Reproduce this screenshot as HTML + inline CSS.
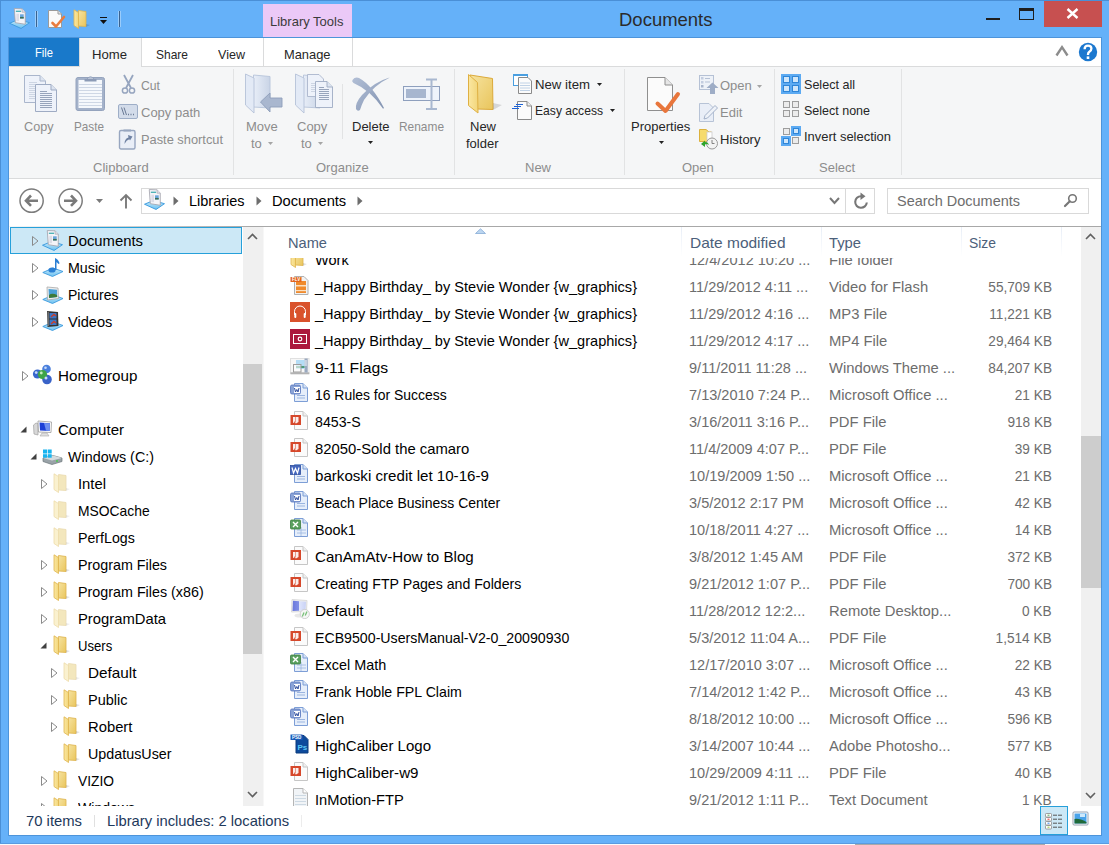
<!DOCTYPE html>
<html><head><meta charset="utf-8"><style>
html,body{margin:0;padding:0;}
body{width:1109px;height:845px;position:relative;overflow:hidden;background:#65b1f9;font-family:"Liberation Sans",sans-serif;}
.t{position:absolute;white-space:nowrap;}
.r{position:absolute;}
</style></head><body>

<div class="r" style="left:0px;top:0px;width:1109px;height:1px;background:#4a8fd6"></div>
<div class="r" style="left:0px;top:0px;width:1px;height:845px;background:#4a8fd6"></div>
<div class="r" style="left:0px;top:843px;width:1109px;height:1px;background:#5a9be0"></div>
<div class="r" style="left:0px;top:844px;width:1109px;height:1px;background:#fbfbfb"></div>
<div class="r" style="left:855px;top:844px;width:190px;height:1px;background:#a9a9a9"></div>
<div class="r" style="left:8px;top:37px;width:1094px;height:799px;background:#fff;box-sizing:border-box;border:1px solid #4d94da"></div>
<div class="t" style="left:619px;top:11px;font-size:18.5px;line-height:18.5px;color:#2b2b2b;transform:scaleX(0.9993);transform-origin:0 0;">Documents</div>
<div class="r" style="left:1044px;top:1px;width:58px;height:26px;background:#c75050"></div>
<div class="r" style="left:986px;top:18px;width:14px;height:2px;background:#1e1e1e"></div>
<div class="r" style="left:1019px;top:8px;width:15px;height:12px;box-sizing:border-box;border:1px solid #1e1e1e;border-top-width:3px"></div>
<div class="r" style="left:263px;top:4px;width:89px;height:33px;background:#ebc9f7"></div>
<div class="t" style="left:270px;top:15px;font-size:13px;line-height:13px;color:#3b3b3b;">Library Tools</div>
<div class="r" style="left:9px;top:38px;width:1092px;height:28px;background:#fff"></div>
<div class="r" style="left:9px;top:66px;width:1092px;height:1px;background:#dadbdc"></div>
<div class="r" style="left:9px;top:38px;width:70px;height:28px;background:#1979ca"></div>
<div class="t" style="left:35px;top:46px;font-size:13px;line-height:13px;color:#fff;transform:scaleX(0.8593);transform-origin:0 0;">File</div>
<div class="r" style="left:79px;top:38px;width:63px;height:29px;background:#f5f6f7;box-sizing:border-box;border:1px solid #dadbdc;border-bottom:none;border-top:none"></div>
<div class="t" style="left:92px;top:48px;font-size:13px;line-height:13px;color:#262626;transform:scaleX(1.0093);transform-origin:0 0;">Home</div>
<div class="t" style="left:156px;top:48px;font-size:13px;line-height:13px;color:#262626;transform:scaleX(0.9225);transform-origin:0 0;">Share</div>
<div class="t" style="left:218px;top:48px;font-size:13px;line-height:13px;color:#262626;transform:scaleX(0.9663);transform-origin:0 0;">View</div>
<div class="r" style="left:263px;top:38px;width:1px;height:28px;background:#dadbdc"></div>
<div class="r" style="left:352px;top:38px;width:1px;height:28px;background:#dadbdc"></div>
<div class="t" style="left:284px;top:48px;font-size:13px;line-height:13px;color:#262626;transform:scaleX(0.9898);transform-origin:0 0;">Manage</div>
<div class="r" style="left:9px;top:67px;width:1092px;height:111px;background:#f5f6f7"></div>
<div class="r" style="left:9px;top:178px;width:1092px;height:1px;background:#dadbdc"></div>
<div class="r" style="left:233px;top:69px;width:1px;height:106px;background:#e2e3e4"></div>
<div class="r" style="left:454px;top:69px;width:1px;height:106px;background:#e2e3e4"></div>
<div class="r" style="left:624px;top:69px;width:1px;height:106px;background:#e2e3e4"></div>
<div class="r" style="left:774px;top:69px;width:1px;height:106px;background:#e2e3e4"></div>
<div class="r" style="left:901px;top:69px;width:1px;height:106px;background:#e2e3e4"></div>
<div class="r" style="left:342px;top:84px;width:1px;height:55px;background:#e2e3e4"></div>
<div class="t" style="left:24px;top:120px;font-size:13px;line-height:13px;color:#8d8d8d;transform:scaleX(0.9721);transform-origin:0 0;">Copy</div>
<div class="t" style="left:74px;top:120px;font-size:13px;line-height:13px;color:#8d8d8d;transform:scaleX(0.9025);transform-origin:0 0;">Paste</div>
<div class="t" style="left:141px;top:79px;font-size:13px;line-height:13px;color:#8d8d8d;transform:scaleX(0.9392);transform-origin:0 0;">Cut</div>
<div class="t" style="left:141px;top:106px;font-size:13px;line-height:13px;color:#8d8d8d;">Copy path</div>
<div class="t" style="left:141px;top:133px;font-size:13px;line-height:13px;color:#8d8d8d;transform:scaleX(0.9868);transform-origin:0 0;">Paste shortcut</div>
<div class="t" style="left:93px;top:161px;font-size:13px;line-height:13px;color:#8d8d8d;">Clipboard</div>
<div class="t" style="left:246px;top:120px;font-size:13px;line-height:13px;color:#8d8d8d;">Move</div>
<div class="t" style="left:251px;top:137px;font-size:13px;line-height:13px;color:#8d8d8d;">to</div>
<div class="t" style="left:297px;top:120px;font-size:13px;line-height:13px;color:#8d8d8d;">Copy</div>
<div class="t" style="left:301px;top:137px;font-size:13px;line-height:13px;color:#8d8d8d;">to</div>
<div class="t" style="left:352px;top:120px;font-size:13px;line-height:13px;color:#262626;">Delete</div>
<div class="t" style="left:399px;top:120px;font-size:13px;line-height:13px;color:#8d8d8d;transform:scaleX(0.9158);transform-origin:0 0;">Rename</div>
<div class="t" style="left:316px;top:161px;font-size:13px;line-height:13px;color:#8d8d8d;">Organize</div>
<div class="t" style="left:470px;top:120px;font-size:13px;line-height:13px;color:#262626;">New</div>
<div class="t" style="left:466px;top:137px;font-size:13px;line-height:13px;color:#262626;">folder</div>
<div class="t" style="left:535px;top:78px;font-size:13px;line-height:13px;color:#262626;transform:scaleX(1.0152);transform-origin:0 0;">New item</div>
<div class="t" style="left:535px;top:104px;font-size:13px;line-height:13px;color:#262626;transform:scaleX(0.9319);transform-origin:0 0;">Easy access</div>
<div class="t" style="left:525px;top:161px;font-size:13px;line-height:13px;color:#8d8d8d;">New</div>
<div class="t" style="left:631px;top:120px;font-size:13px;line-height:13px;color:#262626;">Properties</div>
<div class="t" style="left:720px;top:79px;font-size:13px;line-height:13px;color:#8d8d8d;">Open</div>
<div class="t" style="left:720px;top:106px;font-size:13px;line-height:13px;color:#8d8d8d;">Edit</div>
<div class="t" style="left:720px;top:133px;font-size:13px;line-height:13px;color:#262626;">History</div>
<div class="t" style="left:682px;top:161px;font-size:13px;line-height:13px;color:#8d8d8d;">Open</div>
<div class="t" style="left:804px;top:78px;font-size:13px;line-height:13px;color:#262626;transform:scaleX(0.9668);transform-origin:0 0;">Select all</div>
<div class="t" style="left:804px;top:104px;font-size:13px;line-height:13px;color:#262626;transform:scaleX(0.9612);transform-origin:0 0;">Select none</div>
<div class="t" style="left:804px;top:130px;font-size:13px;line-height:13px;color:#262626;transform:scaleX(0.9951);transform-origin:0 0;">Invert selection</div>
<div class="t" style="left:819px;top:161px;font-size:13px;line-height:13px;color:#8d8d8d;">Select</div>
<div class="r" style="left:141px;top:188px;width:734px;height:26px;box-sizing:border-box;border:1px solid #d9d9d9;background:#fff"></div>
<div class="r" style="left:845px;top:189px;width:1px;height:24px;background:#d9d9d9"></div>
<div class="t" style="left:189px;top:193px;font-size:15px;line-height:15px;color:#000;transform:scaleX(0.9665);transform-origin:0 0;">Libraries</div>
<div class="t" style="left:272px;top:193px;font-size:15px;line-height:15px;color:#000;transform:scaleX(0.9781);transform-origin:0 0;">Documents</div>
<div class="r" style="left:887px;top:188px;width:202px;height:26px;box-sizing:border-box;border:1px solid #d9d9d9;background:#fff"></div>
<div class="t" style="left:897px;top:193px;font-size:15px;line-height:15px;color:#6d6d6d;transform:scaleX(0.9643);transform-origin:0 0;">Search Documents</div>
<div class="r" style="left:9px;top:226px;width:240px;height:1px;background:linear-gradient(to right,#f6f6f6,#a8a8a8)"></div>
<div class="r" style="left:249px;top:226px;width:852px;height:1px;background:#a8a8a8"></div>
<div class="r" style="left:243px;top:227px;width:20px;height:579px;background:#f0f0f0"></div>
<div class="r" style="left:243px;top:364px;width:19px;height:290px;background:#cdcdcd"></div>
<div class="r" style="left:263px;top:227px;width:1px;height:579px;background:#f7f7f7"></div>
<div class="r" style="left:1081px;top:227px;width:20px;height:579px;background:#f0f0f0"></div>
<div class="r" style="left:1081px;top:436px;width:20px;height:152px;background:#cdcdcd"></div>
<div class="r" style="left:10px;top:227px;width:232px;height:27px;box-sizing:border-box;border:1px solid #26a0da;background:#cce8f6"></div>
<div class="r" style="left:0px;top:0px;width:243px;height:806px;overflow:hidden">
<div class="t" style="left:68px;top:233px;font-size:15px;line-height:15px;color:#000;transform:scaleX(0.9886);transform-origin:0 0;">Documents</div>
<div class="t" style="left:68px;top:260px;font-size:15px;line-height:15px;color:#000;transform:scaleX(0.9497);transform-origin:0 0;">Music</div>
<div class="t" style="left:68px;top:287px;font-size:15px;line-height:15px;color:#000;transform:scaleX(0.9320);transform-origin:0 0;">Pictures</div>
<div class="t" style="left:68px;top:314px;font-size:15px;line-height:15px;color:#000;transform:scaleX(0.9738);transform-origin:0 0;">Videos</div>
<div class="t" style="left:58px;top:368px;font-size:15px;line-height:15px;color:#000;transform:scaleX(1.0131);transform-origin:0 0;">Homegroup</div>
<div class="t" style="left:58px;top:422px;font-size:15px;line-height:15px;color:#000;transform:scaleX(1.0021);transform-origin:0 0;">Computer</div>
<div class="t" style="left:68px;top:449px;font-size:15px;line-height:15px;color:#000;transform:scaleX(0.9555);transform-origin:0 0;">Windows (C:)</div>
<div class="t" style="left:78px;top:476px;font-size:15px;line-height:15px;color:#000;transform:scaleX(0.9876);transform-origin:0 0;">Intel</div>
<div class="t" style="left:78px;top:503px;font-size:15px;line-height:15px;color:#000;transform:scaleX(0.9236);transform-origin:0 0;">MSOCache</div>
<div class="t" style="left:78px;top:530px;font-size:15px;line-height:15px;color:#000;transform:scaleX(0.9461);transform-origin:0 0;">PerfLogs</div>
<div class="t" style="left:78px;top:557px;font-size:15px;line-height:15px;color:#000;transform:scaleX(0.9534);transform-origin:0 0;">Program Files</div>
<div class="t" style="left:78px;top:584px;font-size:15px;line-height:15px;color:#000;transform:scaleX(0.9545);transform-origin:0 0;">Program Files (x86)</div>
<div class="t" style="left:78px;top:611px;font-size:15px;line-height:15px;color:#000;transform:scaleX(0.9865);transform-origin:0 0;">ProgramData</div>
<div class="t" style="left:78px;top:638px;font-size:15px;line-height:15px;color:#000;transform:scaleX(0.8731);transform-origin:0 0;">Users</div>
<div class="t" style="left:88px;top:665px;font-size:15px;line-height:15px;color:#000;transform:scaleX(1.0205);transform-origin:0 0;">Default</div>
<div class="t" style="left:88px;top:692px;font-size:15px;line-height:15px;color:#000;transform:scaleX(0.9668);transform-origin:0 0;">Public</div>
<div class="t" style="left:88px;top:719px;font-size:15px;line-height:15px;color:#000;transform:scaleX(0.9862);transform-origin:0 0;">Robert</div>
<div class="t" style="left:88px;top:746px;font-size:15px;line-height:15px;color:#000;transform:scaleX(0.9539);transform-origin:0 0;">UpdatusUser</div>
<div class="t" style="left:78px;top:773px;font-size:15px;line-height:15px;color:#000;transform:scaleX(0.9191);transform-origin:0 0;">VIZIO</div>
<div class="t" style="left:78px;top:800px;font-size:15px;line-height:15px;color:#000;transform:scaleX(0.9367);transform-origin:0 0;">Windows</div>
</div>
<div class="t" style="left:288px;top:235px;font-size:15px;line-height:15px;color:#4c607a;transform:scaleX(0.9747);transform-origin:0 0;">Name</div>
<div class="t" style="left:690px;top:235px;font-size:15px;line-height:15px;color:#4c607a;transform:scaleX(1.0319);transform-origin:0 0;">Date modified</div>
<div class="t" style="left:829px;top:235px;font-size:15px;line-height:15px;color:#4c607a;transform:scaleX(0.9840);transform-origin:0 0;">Type</div>
<div class="t" style="left:969px;top:235px;font-size:15px;line-height:15px;color:#4c607a;transform:scaleX(0.9253);transform-origin:0 0;">Size</div>
<div class="r" style="left:681px;top:227px;width:1px;height:30px;background:linear-gradient(#e8eef7,#fff)"></div>
<div class="r" style="left:821px;top:227px;width:1px;height:30px;background:linear-gradient(#e8eef7,#fff)"></div>
<div class="r" style="left:961px;top:227px;width:1px;height:30px;background:linear-gradient(#e8eef7,#fff)"></div>
<div class="r" style="left:1061px;top:227px;width:1px;height:30px;background:linear-gradient(#e8eef7,#fff)"></div>
<div class="r" style="left:264px;top:258px;width:817px;height:548px;overflow:hidden">
<div class="t" style="left:51px;top:-6px;font-size:15px;line-height:15px;color:#000;transform:scaleX(0.9700);transform-origin:0 0;">Work</div>
<div class="t" style="left:425px;top:-6px;font-size:15px;line-height:15px;color:#6d6d6d;transform:scaleX(0.9700);transform-origin:0 0;">12/4/2012 10:20 ...</div>
<div class="t" style="left:565px;top:-6px;font-size:15px;line-height:15px;color:#6d6d6d;transform:scaleX(0.9850);transform-origin:0 0;">File folder</div>
<div class="t" style="left:51px;top:21px;font-size:15px;line-height:15px;color:#000;transform:scaleX(0.9711);transform-origin:0 0;">_Happy Birthday_ by Stevie Wonder {w_graphics}</div>
<div class="t" style="left:425px;top:21px;font-size:15px;line-height:15px;color:#6d6d6d;transform:scaleX(0.9700);transform-origin:0 0;">11/29/2012 4:11 ...</div>
<div class="t" style="left:565px;top:21px;font-size:15px;line-height:15px;color:#6d6d6d;transform:scaleX(0.9850);transform-origin:0 0;">Video for Flash</div>
<div class="t" style="right:29px;top:21px;font-size:15px;line-height:15px;color:#6d6d6d;transform:scaleX(0.9100);transform-origin:100% 0;">55,709 KB</div>
<div class="t" style="left:51px;top:48px;font-size:15px;line-height:15px;color:#000;transform:scaleX(0.9711);transform-origin:0 0;">_Happy Birthday_ by Stevie Wonder {w_graphics}</div>
<div class="t" style="left:425px;top:48px;font-size:15px;line-height:15px;color:#6d6d6d;transform:scaleX(0.9700);transform-origin:0 0;">11/29/2012 4:16 ...</div>
<div class="t" style="left:565px;top:48px;font-size:15px;line-height:15px;color:#6d6d6d;transform:scaleX(0.9850);transform-origin:0 0;">MP3 File</div>
<div class="t" style="right:29px;top:48px;font-size:15px;line-height:15px;color:#6d6d6d;transform:scaleX(0.9100);transform-origin:100% 0;">11,221 KB</div>
<div class="t" style="left:51px;top:75px;font-size:15px;line-height:15px;color:#000;transform:scaleX(0.9711);transform-origin:0 0;">_Happy Birthday_ by Stevie Wonder {w_graphics}</div>
<div class="t" style="left:425px;top:75px;font-size:15px;line-height:15px;color:#6d6d6d;transform:scaleX(0.9700);transform-origin:0 0;">11/29/2012 4:17 ...</div>
<div class="t" style="left:565px;top:75px;font-size:15px;line-height:15px;color:#6d6d6d;transform:scaleX(0.9850);transform-origin:0 0;">MP4 File</div>
<div class="t" style="right:29px;top:75px;font-size:15px;line-height:15px;color:#6d6d6d;transform:scaleX(0.9100);transform-origin:100% 0;">29,464 KB</div>
<div class="t" style="left:51px;top:102px;font-size:15px;line-height:15px;color:#000;transform:scaleX(1.0465);transform-origin:0 0;">9-11 Flags</div>
<div class="t" style="left:425px;top:102px;font-size:15px;line-height:15px;color:#6d6d6d;transform:scaleX(0.9700);transform-origin:0 0;">9/11/2011 11:28 ...</div>
<div class="t" style="left:565px;top:102px;font-size:15px;line-height:15px;color:#6d6d6d;transform:scaleX(0.9850);transform-origin:0 0;">Windows Theme ...</div>
<div class="t" style="right:29px;top:102px;font-size:15px;line-height:15px;color:#6d6d6d;transform:scaleX(0.9100);transform-origin:100% 0;">84,207 KB</div>
<div class="t" style="left:51px;top:129px;font-size:15px;line-height:15px;color:#000;transform:scaleX(0.9285);transform-origin:0 0;">16 Rules for Success</div>
<div class="t" style="left:425px;top:129px;font-size:15px;line-height:15px;color:#6d6d6d;transform:scaleX(0.9700);transform-origin:0 0;">7/13/2010 7:24 P...</div>
<div class="t" style="left:565px;top:129px;font-size:15px;line-height:15px;color:#6d6d6d;transform:scaleX(0.9850);transform-origin:0 0;">Microsoft Office ...</div>
<div class="t" style="right:29px;top:129px;font-size:15px;line-height:15px;color:#6d6d6d;transform:scaleX(0.9100);transform-origin:100% 0;">21 KB</div>
<div class="t" style="left:51px;top:156px;font-size:15px;line-height:15px;color:#000;transform:scaleX(0.9448);transform-origin:0 0;">8453-S</div>
<div class="t" style="left:425px;top:156px;font-size:15px;line-height:15px;color:#6d6d6d;transform:scaleX(0.9700);transform-origin:0 0;">3/16/2011 3:16 P...</div>
<div class="t" style="left:565px;top:156px;font-size:15px;line-height:15px;color:#6d6d6d;transform:scaleX(0.9850);transform-origin:0 0;">PDF File</div>
<div class="t" style="right:29px;top:156px;font-size:15px;line-height:15px;color:#6d6d6d;transform:scaleX(0.9100);transform-origin:100% 0;">918 KB</div>
<div class="t" style="left:51px;top:183px;font-size:15px;line-height:15px;color:#000;transform:scaleX(0.9895);transform-origin:0 0;">82050-Sold the camaro</div>
<div class="t" style="left:425px;top:183px;font-size:15px;line-height:15px;color:#6d6d6d;transform:scaleX(0.9700);transform-origin:0 0;">11/4/2009 4:07 P...</div>
<div class="t" style="left:565px;top:183px;font-size:15px;line-height:15px;color:#6d6d6d;transform:scaleX(0.9850);transform-origin:0 0;">PDF File</div>
<div class="t" style="right:29px;top:183px;font-size:15px;line-height:15px;color:#6d6d6d;transform:scaleX(0.9100);transform-origin:100% 0;">39 KB</div>
<div class="t" style="left:51px;top:210px;font-size:15px;line-height:15px;color:#000;transform:scaleX(1.0076);transform-origin:0 0;">barkoski credit let 10-16-9</div>
<div class="t" style="left:425px;top:210px;font-size:15px;line-height:15px;color:#6d6d6d;transform:scaleX(0.9700);transform-origin:0 0;">10/19/2009 1:50 ...</div>
<div class="t" style="left:565px;top:210px;font-size:15px;line-height:15px;color:#6d6d6d;transform:scaleX(0.9850);transform-origin:0 0;">Microsoft Office ...</div>
<div class="t" style="right:29px;top:210px;font-size:15px;line-height:15px;color:#6d6d6d;transform:scaleX(0.9100);transform-origin:100% 0;">21 KB</div>
<div class="t" style="left:51px;top:237px;font-size:15px;line-height:15px;color:#000;transform:scaleX(0.9333);transform-origin:0 0;">Beach Place Business Center</div>
<div class="t" style="left:425px;top:237px;font-size:15px;line-height:15px;color:#6d6d6d;transform:scaleX(0.9700);transform-origin:0 0;">3/5/2012 2:17 PM</div>
<div class="t" style="left:565px;top:237px;font-size:15px;line-height:15px;color:#6d6d6d;transform:scaleX(0.9850);transform-origin:0 0;">Microsoft Office ...</div>
<div class="t" style="right:29px;top:237px;font-size:15px;line-height:15px;color:#6d6d6d;transform:scaleX(0.9100);transform-origin:100% 0;">42 KB</div>
<div class="t" style="left:51px;top:264px;font-size:15px;line-height:15px;color:#000;transform:scaleX(0.9569);transform-origin:0 0;">Book1</div>
<div class="t" style="left:425px;top:264px;font-size:15px;line-height:15px;color:#6d6d6d;transform:scaleX(0.9700);transform-origin:0 0;">10/18/2011 4:27 ...</div>
<div class="t" style="left:565px;top:264px;font-size:15px;line-height:15px;color:#6d6d6d;transform:scaleX(0.9850);transform-origin:0 0;">Microsoft Office ...</div>
<div class="t" style="right:29px;top:264px;font-size:15px;line-height:15px;color:#6d6d6d;transform:scaleX(0.9100);transform-origin:100% 0;">14 KB</div>
<div class="t" style="left:51px;top:291px;font-size:15px;line-height:15px;color:#000;transform:scaleX(1.0072);transform-origin:0 0;">CanAmAtv-How to Blog</div>
<div class="t" style="left:425px;top:291px;font-size:15px;line-height:15px;color:#6d6d6d;transform:scaleX(0.9700);transform-origin:0 0;">3/8/2012 1:45 AM</div>
<div class="t" style="left:565px;top:291px;font-size:15px;line-height:15px;color:#6d6d6d;transform:scaleX(0.9850);transform-origin:0 0;">PDF File</div>
<div class="t" style="right:29px;top:291px;font-size:15px;line-height:15px;color:#6d6d6d;transform:scaleX(0.9100);transform-origin:100% 0;">372 KB</div>
<div class="t" style="left:51px;top:318px;font-size:15px;line-height:15px;color:#000;transform:scaleX(0.9422);transform-origin:0 0;">Creating FTP Pages and Folders</div>
<div class="t" style="left:425px;top:318px;font-size:15px;line-height:15px;color:#6d6d6d;transform:scaleX(0.9700);transform-origin:0 0;">9/21/2012 1:07 P...</div>
<div class="t" style="left:565px;top:318px;font-size:15px;line-height:15px;color:#6d6d6d;transform:scaleX(0.9850);transform-origin:0 0;">PDF File</div>
<div class="t" style="right:29px;top:318px;font-size:15px;line-height:15px;color:#6d6d6d;transform:scaleX(0.9100);transform-origin:100% 0;">700 KB</div>
<div class="t" style="left:51px;top:345px;font-size:15px;line-height:15px;color:#000;transform:scaleX(1.0226);transform-origin:0 0;">Default</div>
<div class="t" style="left:425px;top:345px;font-size:15px;line-height:15px;color:#6d6d6d;transform:scaleX(0.9700);transform-origin:0 0;">11/28/2012 12:2...</div>
<div class="t" style="left:565px;top:345px;font-size:15px;line-height:15px;color:#6d6d6d;transform:scaleX(0.9850);transform-origin:0 0;">Remote Desktop...</div>
<div class="t" style="right:29px;top:345px;font-size:15px;line-height:15px;color:#6d6d6d;transform:scaleX(0.9100);transform-origin:100% 0;">0 KB</div>
<div class="t" style="left:51px;top:372px;font-size:15px;line-height:15px;color:#000;transform:scaleX(0.9442);transform-origin:0 0;">ECB9500-UsersManual-V2-0_20090930</div>
<div class="t" style="left:425px;top:372px;font-size:15px;line-height:15px;color:#6d6d6d;transform:scaleX(0.9700);transform-origin:0 0;">5/3/2012 11:04 A...</div>
<div class="t" style="left:565px;top:372px;font-size:15px;line-height:15px;color:#6d6d6d;transform:scaleX(0.9850);transform-origin:0 0;">PDF File</div>
<div class="t" style="right:29px;top:372px;font-size:15px;line-height:15px;color:#6d6d6d;transform:scaleX(0.9100);transform-origin:100% 0;">1,514 KB</div>
<div class="t" style="left:51px;top:399px;font-size:15px;line-height:15px;color:#000;transform:scaleX(0.9596);transform-origin:0 0;">Excel Math</div>
<div class="t" style="left:425px;top:399px;font-size:15px;line-height:15px;color:#6d6d6d;transform:scaleX(0.9700);transform-origin:0 0;">12/17/2010 3:07 ...</div>
<div class="t" style="left:565px;top:399px;font-size:15px;line-height:15px;color:#6d6d6d;transform:scaleX(0.9850);transform-origin:0 0;">Microsoft Office ...</div>
<div class="t" style="right:29px;top:399px;font-size:15px;line-height:15px;color:#6d6d6d;transform:scaleX(0.9100);transform-origin:100% 0;">22 KB</div>
<div class="t" style="left:51px;top:426px;font-size:15px;line-height:15px;color:#000;transform:scaleX(0.9456);transform-origin:0 0;">Frank Hoble FPL Claim</div>
<div class="t" style="left:425px;top:426px;font-size:15px;line-height:15px;color:#6d6d6d;transform:scaleX(0.9700);transform-origin:0 0;">7/14/2012 1:42 P...</div>
<div class="t" style="left:565px;top:426px;font-size:15px;line-height:15px;color:#6d6d6d;transform:scaleX(0.9850);transform-origin:0 0;">Microsoft Office ...</div>
<div class="t" style="right:29px;top:426px;font-size:15px;line-height:15px;color:#6d6d6d;transform:scaleX(0.9100);transform-origin:100% 0;">43 KB</div>
<div class="t" style="left:51px;top:453px;font-size:15px;line-height:15px;color:#000;transform:scaleX(0.9216);transform-origin:0 0;">Glen</div>
<div class="t" style="left:425px;top:453px;font-size:15px;line-height:15px;color:#6d6d6d;transform:scaleX(0.9700);transform-origin:0 0;">8/18/2012 10:00 ...</div>
<div class="t" style="left:565px;top:453px;font-size:15px;line-height:15px;color:#6d6d6d;transform:scaleX(0.9850);transform-origin:0 0;">Microsoft Office ...</div>
<div class="t" style="right:29px;top:453px;font-size:15px;line-height:15px;color:#6d6d6d;transform:scaleX(0.9100);transform-origin:100% 0;">596 KB</div>
<div class="t" style="left:51px;top:480px;font-size:15px;line-height:15px;color:#000;transform:scaleX(1.0008);transform-origin:0 0;">HighCaliber Logo</div>
<div class="t" style="left:425px;top:480px;font-size:15px;line-height:15px;color:#6d6d6d;transform:scaleX(0.9700);transform-origin:0 0;">3/14/2007 10:44 ...</div>
<div class="t" style="left:565px;top:480px;font-size:15px;line-height:15px;color:#6d6d6d;transform:scaleX(0.9850);transform-origin:0 0;">Adobe Photosho...</div>
<div class="t" style="right:29px;top:480px;font-size:15px;line-height:15px;color:#6d6d6d;transform:scaleX(0.9100);transform-origin:100% 0;">577 KB</div>
<div class="t" style="left:51px;top:507px;font-size:15px;line-height:15px;color:#000;transform:scaleX(1.0094);transform-origin:0 0;">HighCaliber-w9</div>
<div class="t" style="left:425px;top:507px;font-size:15px;line-height:15px;color:#6d6d6d;transform:scaleX(0.9700);transform-origin:0 0;">10/29/2009 4:11 ...</div>
<div class="t" style="left:565px;top:507px;font-size:15px;line-height:15px;color:#6d6d6d;transform:scaleX(0.9850);transform-origin:0 0;">PDF File</div>
<div class="t" style="right:29px;top:507px;font-size:15px;line-height:15px;color:#6d6d6d;transform:scaleX(0.9100);transform-origin:100% 0;">40 KB</div>
<div class="t" style="left:51px;top:534px;font-size:15px;line-height:15px;color:#000;transform:scaleX(0.9763);transform-origin:0 0;">InMotion-FTP</div>
<div class="t" style="left:425px;top:534px;font-size:15px;line-height:15px;color:#6d6d6d;transform:scaleX(0.9700);transform-origin:0 0;">9/21/2012 1:11 P...</div>
<div class="t" style="left:565px;top:534px;font-size:15px;line-height:15px;color:#6d6d6d;transform:scaleX(0.9850);transform-origin:0 0;">Text Document</div>
<div class="t" style="right:29px;top:534px;font-size:15px;line-height:15px;color:#6d6d6d;transform:scaleX(0.9100);transform-origin:100% 0;">1 KB</div>
</div>
<div class="t" style="left:26px;top:813px;font-size:15px;line-height:15px;color:#1e395b;transform:scaleX(0.9878);transform-origin:0 0;">70 items</div>
<div class="r" style="left:94px;top:815px;width:1px;height:12px;background:#e0e0e0"></div>
<div class="r" style="left:301px;top:815px;width:1px;height:12px;background:#ececec"></div>
<div class="t" style="left:107px;top:813px;font-size:15px;line-height:15px;color:#1e395b;transform:scaleX(0.9833);transform-origin:0 0;">Library includes: 2 locations</div>
<div class="r" style="left:1040px;top:806px;width:28px;height:29px;box-sizing:border-box;border:1px solid #26a0da;background:#cce8f6"></div>
<svg width="0" height="0" style="position:absolute">
<defs>
<linearGradient id="gFold" x1="0" y1="0" x2="1" y2="0"><stop offset="0" stop-color="#fbe7a1"/><stop offset="1" stop-color="#f2d67b"/></linearGradient>
<linearGradient id="gBack" x1="0" y1="0" x2="1" y2="1"><stop offset="0" stop-color="#f6e3a0"/><stop offset="1" stop-color="#e9c55c"/></linearGradient>
<linearGradient id="gTray" x1="0" y1="0" x2="0" y2="1"><stop offset="0" stop-color="#c9ecfc"/><stop offset="1" stop-color="#6cc0f0"/></linearGradient>
<symbol id="folder" viewBox="0 0 20 20">
  <path d="M5.5,1.5 L13,2.5 L13,17.5 L5.5,17 Z" fill="url(#gBack)" stroke="#ddb24b" stroke-width="0.8"/>
  <path d="M13,15 L17,16 L13,18 Z" fill="#000" opacity="0.12"/>
  <path d="M1,0.8 L5.5,3.5 L5.5,19.5 L1,16.5 Z" fill="url(#gFold)" stroke="#e0b54e" stroke-width="0.8"/>
</symbol>
<symbol id="folderp" viewBox="0 0 20 20">
  <path d="M5.5,1.5 L13,2.5 L13,17.5 L5.5,17 Z" fill="#f3e7bd" stroke="#eadbb0" stroke-width="0.8"/>
  <path d="M13,15 L17,16 L13,18 Z" fill="#000" opacity="0.07"/>
  <path d="M1,0.8 L5.5,3.5 L5.5,19.5 L1,16.5 Z" fill="#faf1cf" stroke="#eddcaa" stroke-width="0.8"/>
</symbol>
<symbol id="tray" viewBox="0 0 20 20">
  <path d="M0.5,15.5 L11,11 L19.5,14.5 L9,19.5 Z" fill="url(#gTray)" stroke="#3b9ade" stroke-width="0.9"/>
</symbol>
<symbol id="lib" viewBox="0 0 20 20">
  <path d="M0.5,14.5 L9,11 L19.5,14 L11.5,19.5 Z" fill="url(#gTray)" stroke="#3b9ade" stroke-width="0.9"/>
  <path d="M5,0.5 L12.5,0.8 L15.5,4 L15.5,15.5 L6,14 Z" fill="#f4f4f8" stroke="#a3a3ad" stroke-width="0.8"/>
  <path d="M12.5,0.8 L12.5,4 L15.5,4" fill="#e2e2ea" stroke="#a3a3ad" stroke-width="0.6"/>
  <rect x="6.5" y="2.5" width="5" height="1.3" fill="#4fb3b7"/>
  <rect x="10.5" y="6" width="3.5" height="4" fill="#6aa6dc"/><rect x="10.5" y="8.5" width="3.5" height="1.5" fill="#3c6e52"/>
  <rect x="7" y="5.5" width="2.5" height="7" fill="#dcdce6"/>
</symbol>
<symbol id="pg" viewBox="0 0 20 20">
  <path d="M3.5,0.5 H13 L17.5,5 V19.5 H3.5 Z" fill="#fbfbfb" stroke="#bdbdbd"/>
  <path d="M13,0.5 V5 H17.5" fill="#eee" stroke="#bdbdbd"/>
</symbol>
<symbol id="pdf" viewBox="0 0 20 20">
  <path d="M4.5,1.5 H13 L17.5,6 V19.5 H4.5 Z" fill="#fbfbfb" stroke="#c6c6c6"/>
  <path d="M13,1.5 V6 H17.5" fill="#efefef" stroke="#c6c6c6"/>
  <rect x="0.5" y="5" width="10.5" height="10" fill="#d6482b"/>
  <path d="M3,7 H5 V11 L4,12.5 H5.5 V7 H8.5 V12 L6,13.5 L4.5,12.5 L3,13 Z" fill="#fff" opacity="0.9"/>
</symbol>
<symbol id="word" viewBox="0 0 20 20">
  <path d="M4.5,0.5 H13 L17.5,5 V18.5 H4.5 Z" fill="#e6eefa" stroke="#7d9ed6"/>
  <path d="M13,0.5 V5 H17.5" fill="#d5e2f5" stroke="#7d9ed6"/>
  <rect x="7" y="12" width="8" height="1" fill="#9bb5e0"/><rect x="7" y="14.5" width="8" height="1" fill="#9bb5e0"/>
  <rect x="0.5" y="1.5" width="10" height="9" fill="#4668bf" stroke="#2d4c9c" stroke-width="0.8"/>
  <path d="M2,3.5 L3.5,9 L5.5,4.5 L7.5,9 L9,3.5" fill="none" stroke="#fff" stroke-width="1.2"/>
</symbol>
<symbol id="worda" viewBox="0 0 20 20">
  <path d="M4.5,0.5 H13 L17.5,5 V18.5 H4.5 Z" fill="#e6eefa" stroke="#7d9ed6"/>
  <path d="M13,0.5 V5 H17.5" fill="#d5e2f5" stroke="#7d9ed6"/>
  <rect x="7" y="12" width="8" height="1" fill="#9bb5e0"/><rect x="7" y="14.5" width="8" height="1" fill="#9bb5e0"/>
  <rect x="0.5" y="2" width="10" height="9" rx="1.5" fill="#8aa3d6" stroke="#5575bd" stroke-width="0.8"/>
  <rect x="4" y="4" width="6" height="6" fill="#fff"/>
  <path d="M4.5,5 L5.5,9 L6.8,6.5 L8,9 L9,5" fill="none" stroke="#2d4c9c" stroke-width="1"/>
</symbol>
<symbol id="excel" viewBox="0 0 20 20">
  <path d="M4.5,0.5 H13 L17.5,5 V18.5 H4.5 Z" fill="#e6eefa" stroke="#7d9ed6"/>
  <path d="M13,0.5 V5 H17.5" fill="#d5e2f5" stroke="#7d9ed6"/>
  <path d="M7,12 H16 M7,15 H16 M11,9 V18" stroke="#9bb5e0" stroke-width="0.8"/>
  <rect x="0.5" y="2" width="10" height="9" rx="1" fill="#5aa05e" stroke="#3d7d41" stroke-width="0.8"/>
  <path d="M3,4 L8,9 M8,4 L3,9" stroke="#fff" stroke-width="1.4"/>
</symbol>
<symbol id="txt" viewBox="0 0 20 20">
  <path d="M3.5,0.5 H13 L17.5,5 V19.5 H3.5 Z" fill="#f1f4f7" stroke="#b5b5b5"/>
  <path d="M13,0.5 V5 H17.5" fill="#fff" stroke="#b5b5b5"/>
  <path d="M5,7.5 H16 M5,10.5 H16 M5,13.5 H16 M5,16.5 H16" stroke="#cdd9e3" stroke-width="1.2"/>
</symbol>
</defs></svg>
<svg class="r" style="left:9px;top:8px;" width="21" height="21" viewBox="0 0 20 20"><use href="#lib"/></svg>
<div class="r" style="left:36px;top:11px;width:1px;height:16px;background:#39628f;box-shadow:1px 0 0 rgba(255,255,255,.35),-1px 0 0 rgba(255,255,255,.35)"></div>
<div class="r" style="left:119px;top:11px;width:1px;height:16px;background:#39628f;box-shadow:1px 0 0 rgba(255,255,255,.35),-1px 0 0 rgba(255,255,255,.35)"></div>
<svg class="r" style="left:47px;top:9px" width="20" height="20" viewBox="0 0 20 20"><path d="M1.5,1.5 H11 L14.5,5 V18.5 H1.5 Z" fill="#fafafa" stroke="#9a9a9a"/><path d="M11,1.5 V5 H14.5" fill="#e4e4e4" stroke="#9a9a9a"/><path d="M5.5,14 L9,17.5 L17,8" fill="none" stroke="#ea7c3e" stroke-width="2.6" stroke-linecap="round" stroke-linejoin="round"/></svg>
<svg class="r" style="left:73px;top:9px;" width="20" height="20" viewBox="0 0 20 20"><use href="#folder"/></svg>
<div class="r" style="left:100px;top:17px;width:7px;height:1px;background:#111"></div>
<svg class="r" style="left:100px;top:20px" width="7" height="4" viewBox="0 0 7 4"><path d="M0,0 H7 L3.5,4 Z" fill="#111"/></svg>
<svg class="r" style="left:1066px;top:8px" width="13" height="11" viewBox="0 0 13 11"><path d="M1.5,1 L11.5,10 M11.5,1 L1.5,10" stroke="#fff" stroke-width="2.4"/></svg>
<svg class="r" style="left:1055px;top:45px" width="14" height="12" viewBox="0 0 14 12"><path d="M1.5,10.5 L7,2.2 L12.5,10.5" fill="none" stroke="#8c8c8c" stroke-width="2.4"/></svg>
<svg class="r" style="left:1078px;top:42px" width="20" height="20" viewBox="0 0 20 20"><circle cx="10" cy="10" r="9.2" fill="#1c78cf"/><path d="M6.6,7.2 Q6.6,3.6 10,3.6 Q13.4,3.6 13.4,6.6 Q13.4,8.6 11.4,9.8 Q10,10.8 10,12.4 V13" fill="none" stroke="#fff" stroke-width="2.3"/><rect x="8.7" y="14.4" width="2.6" height="2.6" fill="#fff"/></svg>
<svg class="r" style="left:24px;top:75px" width="34" height="38" viewBox="0 0 34 38"><path d="M0.5,0.5 H16 L21.5,6 V27.5 H0.5 Z" fill="#eef2fa" stroke="#aab6cc"/><path d="M16,0.5 V6 H21.5" fill="#dde4f0" stroke="#aab6cc"/>
<path d="M5,7.5 H13 M5,9.5 H11 M5,11.5 H11 M5,13.5 H11 M5,15.5 H11 M5,17.5 H11 M5,19.5 H11 M5,21.5 H11 M5,23.5 H11" stroke="#cdd5e3" stroke-width="1"/>
<path d="M11.5,9.5 H27 L32.5,15 V36.5 H11.5 Z" fill="#eef2fa" stroke="#9eabc3"/><path d="M27,9.5 V15 H32.5" fill="#dde4f0" stroke="#9eabc3"/>
<path d="M16,16.5 H23 M16,18.5 H28 M16,20.5 H28 M16,22.5 H28 M16,24.5 H28 M16,26.5 H28 M16,28.5 H28 M16,30.5 H28 M16,32.5 H28" stroke="#97a4bb" stroke-width="1"/></svg>
<svg class="r" style="left:75px;top:75px" width="31" height="37" viewBox="0 0 31 37"><rect x="1" y="2.5" width="28.5" height="33" rx="2" fill="#a4b2ca" stroke="#94a3bd"/>
<rect x="3.5" y="5" width="23.5" height="28" fill="#f5f8fc"/>
<path d="M3.5,9.5 H27 M3.5,12.5 H27 M3.5,15.5 H27 M3.5,18.5 H27 M3.5,21.5 H27 M3.5,24.5 H27 M3.5,27.5 H27 M3.5,30.5 H27" stroke="#c9d3e2" stroke-width="0.9"/>
<rect x="9.5" y="4" width="12" height="2.5" fill="#8c9bb6"/><path d="M12,4 Q15.5,-0.5 19,4" fill="#b8c3d6" stroke="#8c9bb6" stroke-width="0.8"/></svg>
<svg class="r" style="left:121px;top:74px" width="15" height="21" viewBox="0 0 15 21"><path d="M3,1 L10,14 M12,1 L5,14" stroke="#96a5bf" stroke-width="1.8"/>
<circle cx="4" cy="16.5" r="2.6" fill="none" stroke="#96a5bf" stroke-width="1.5"/><circle cx="11" cy="16.5" r="2.6" fill="none" stroke="#96a5bf" stroke-width="1.5"/></svg>
<svg class="r" style="left:118px;top:104px" width="21" height="16" viewBox="0 0 21 16"><rect x="0.5" y="0.5" width="19" height="14" rx="1.5" fill="#d3dcea" stroke="#9eaec7"/>
<path d="M3.5,3.5 L6,11 M6,3.5 L8.5,11" stroke="#6b7b96" stroke-width="1"/><path d="M10,10.5 h1 M12.5,10.5 h1 M15,10.5 h1" stroke="#6b7b96" stroke-width="1.3"/></svg>
<svg class="r" style="left:118px;top:128px" width="19" height="22" viewBox="0 0 19 22"><rect x="1.5" y="2.5" width="15.5" height="18.5" rx="1.5" fill="#e9eef7" stroke="#97a6c0" stroke-width="1.4"/>
<rect x="5.5" y="1.5" width="7.5" height="2" fill="#97a6c0"/>
<path d="M6.5,16 Q6.5,10.5 10.5,9.5 L10,7 L14.5,8.5 L12,12.5 L11.3,11.2 Q8.5,12 6.5,16 Z" fill="#6f82a3"/></svg>
<svg class="r" style="left:244px;top:73px" width="40" height="42" viewBox="0 0 40 42"><defs><linearGradient id="gMf" x1="0" y1="0" x2="1" y2="0"><stop offset="0" stop-color="#e8eef8"/><stop offset="1" stop-color="#c9d4e6"/></linearGradient></defs>
<path d="M9.5,2 L26,3.5 L26,35 L9.5,34 Z" fill="url(#gMf)" stroke="#b7c4da" stroke-width="0.9"/>
<path d="M1.5,1 L10,5 L10,40 L1.5,32 Z" fill="#e3eaf6" stroke="#b5c2d8" stroke-width="0.9"/>
<path d="M16.5,29 L26,20 L26,25 L38,25 L38,34 L26,34 L26,39 Z" fill="#a9b7cf" stroke="#8e9eba" stroke-width="0.9"/></svg>
<svg class="r" style="left:294px;top:73px" width="40" height="42" viewBox="0 0 40 42"><path d="M9.5,2 L26,3.5 L26,35 L9.5,34 Z" fill="url(#gMf)" stroke="#b7c4da" stroke-width="0.9"/>
<path d="M1.5,1 L10,5 L10,40 L1.5,32 Z" fill="#e3eaf6" stroke="#b5c2d8" stroke-width="0.9"/>
<path d="M13.5,1.5 H25 L29.5,6 V23.5 H13.5 Z" fill="#eef2fa" stroke="#aab6cc" stroke-width="0.9"/>
<path d="M21.5,8.5 H33 L38.5,14 V34.5 H21.5 Z" fill="#eef2fa" stroke="#9eabc3" stroke-width="0.9"/><path d="M33,8.5 V14 H38.5" fill="#dde4f0" stroke="#9eabc3" stroke-width="0.9"/>
<path d="M25,14.5 H30 M25,16.5 H35 M25,18.5 H35 M25,20.5 H35 M25,22.5 H35 M25,24.5 H35 M25,26.5 H35" stroke="#97a4bb" stroke-width="1"/><path d="M17,10.5 H21 M17,12.5 H21 M17,14.5 H21 M17,16.5 H21 M17,18.5 H21" stroke="#cdd5e3" stroke-width="1"/></svg>
<svg class="r" style="left:350px;top:75px" width="42" height="38" viewBox="0 0 42 38"><defs><linearGradient id="gX" x1="0" y1="0" x2="1" y2="1"><stop offset="0" stop-color="#b2bfd6"/><stop offset="1" stop-color="#8394b2"/></linearGradient></defs>
<path d="M2.5,5 Q5,1.5 9,3 Q22,10 34,33 Q33,34 32.5,33 Q20,15 3.5,8 Q1.5,6.5 2.5,5 Z" fill="url(#gX)"/>
<path d="M39.5,2.5 Q24,7 12,20 Q5,28 6,34 Q7.5,37 10,35 Q11.5,30 14,25 Q24,10 39,3 Z" fill="url(#gX)"/></svg>
<svg class="r" style="left:402px;top:78px" width="41" height="33" viewBox="0 0 41 33"><rect x="1.5" y="8.5" width="36" height="14" fill="#eef3fb" stroke="#8e9fbd"/>
<rect x="4" y="11" width="20" height="9" fill="#a7b6cf"/>
<path d="M24,1.5 H35 M24,31 H35 M29.5,1.5 V31" stroke="#a9b8d0" stroke-width="2"/></svg>
<svg class="r" style="left:466px;top:72px" width="40" height="44" viewBox="0 0 40 44"><path d="M4,3 L26.5,6.5 L27,37.5 L11.5,37 Z" fill="url(#gBack)" stroke="#dcaa3a" stroke-width="1"/>
<path d="M27,31 L36,33 L27,38 Z" fill="#000" opacity="0.13"/>
<path d="M2.5,2.5 L11.5,10.5 L12,41 L2.5,33.5 Z" fill="url(#gFold)" stroke="#dfb043" stroke-width="1"/></svg>
<svg class="r" style="left:511px;top:72px" width="22" height="23" viewBox="0 0 22 23"><rect x="2.5" y="2.5" width="14" height="11" fill="#fff" stroke="#4a9fe0" stroke-width="1"/><rect x="2.5" y="2" width="14" height="2" fill="#4a9fe0"/>
<path d="M7.5,5.5 H17 L20.5,9 V21.5 H7.5 Z" fill="#fbfbfb" stroke="#8a8a8a"/>
<path d="M9,11 H19 M9,13.5 H19 M9,16 H19 M9,18.5 H19" stroke="#b9cde3" stroke-width="0.9"/></svg>
<svg class="r" style="left:511px;top:99px" width="23" height="22" viewBox="0 0 23 22"><path d="M6.5,2.5 H16 L20.5,7 V20.5 H6.5 Z" fill="#fbfbfb" stroke="#8a8a8a"/><path d="M16,2.5 V7 H20.5" fill="#ececec" stroke="#8a8a8a"/>
<path d="M5,5.5 H12 M3,7.5 H10 M1,9.5 H8" stroke="#1e63d6" stroke-width="1"/></svg>
<svg class="r" style="left:645px;top:75px" width="38" height="40" viewBox="0 0 38 40"><path d="M2.5,2.5 H20 L27.5,10 V35.5 H2.5 Z" fill="#fbfbfb" stroke="#8f8f8f"/><path d="M20,2.5 V10 H27.5" fill="#e6e6e6" stroke="#8f8f8f"/>
<path d="M12.5,28.5 L20.5,36 L33,19" fill="none" stroke="#e8763c" stroke-width="4" stroke-linecap="round" stroke-linejoin="round"/></svg>
<svg class="r" style="left:698px;top:74px" width="21" height="22" viewBox="0 0 21 22"><rect x="1.5" y="1.5" width="14" height="14" fill="#eef2f8" stroke="#b5c1d5"/>
<rect x="3" y="3" width="2.5" height="2.5" fill="#c3cde0"/><rect x="3" y="7" width="2.5" height="2.5" fill="#c3cde0"/><rect x="3" y="11" width="2.5" height="2.5" fill="#a9b6cc"/>
<path d="M7,4.5 H12 M7,8 H12" stroke="#b5c1d5"/>
<path d="M8.5,14 L14.5,8.5 L20.5,14 H17 V20 H12 V14 Z" fill="#9eadc6"/></svg>
<svg class="r" style="left:698px;top:102px" width="21" height="21" viewBox="0 0 21 21"><path d="M1.5,1.5 H11 L15.5,6 V19.5 H1.5 Z" fill="#e9eef7" stroke="#b7c3d6"/>
<path d="M6,17 L7,13.5 L17,3.5 L19.5,6 L9.5,16 Z" fill="#eef2f8" stroke="#a3b1c9"/></svg>
<svg class="r" style="left:698px;top:128px" width="21" height="22" viewBox="0 0 21 22"><path d="M1.5,1.5 H8 L11,4 H13.5 V13.5 H1.5 Z" fill="#f6db6d" stroke="#dcb13c"/>
<rect x="9" y="4" width="5" height="8" fill="#fff" stroke="#ccc" stroke-width="0.8"/>
<circle cx="14" cy="15.5" r="5.5" fill="#f3f3f3" stroke="#9a9a9a"/>
<path d="M14,12 V15.5 H16.5" stroke="#777" stroke-width="0.9" fill="none"/>
<path d="M3,16 L7,12.5 L7,14 Q10,14 11,17 Q9,15.5 7,16.5 L7,19 Z" fill="#2ea42c"/></svg>
<svg class="r" style="left:781px;top:74px" width="20" height="20" viewBox="0 0 20 20"><rect x="0" y="0" width="20" height="20" fill="#5caaf2"/>
<rect x="2.5" y="2.5" width="6" height="6" fill="#cfe6fb" stroke="#2f86d8"/><rect x="11.5" y="2.5" width="6" height="6" fill="#cfe6fb" stroke="#2f86d8"/>
<rect x="2.5" y="11.5" width="6" height="6" fill="#cfe6fb" stroke="#2f86d8"/><rect x="11.5" y="11.5" width="6" height="6" fill="#cfe6fb" stroke="#2f86d8"/></svg>
<svg class="r" style="left:781px;top:100px" width="20" height="19" viewBox="0 0 20 19"><rect x="2.5" y="1.5" width="6" height="6" fill="#ececec" stroke="#9d9d9d"/><rect x="11.5" y="1.5" width="6" height="6" fill="#ececec" stroke="#9d9d9d"/>
<rect x="2.5" y="10.5" width="6" height="6" fill="#ececec" stroke="#9d9d9d"/><rect x="11.5" y="10.5" width="6" height="6" fill="#ececec" stroke="#9d9d9d"/></svg>
<svg class="r" style="left:781px;top:126px" width="20" height="20" viewBox="0 0 20 20"><rect x="2.5" y="2.5" width="6" height="6" fill="#ececec" stroke="#9d9d9d"/><rect x="11.5" y="11.5" width="6" height="6" fill="#ececec" stroke="#9d9d9d"/>
<rect x="10" y="0" width="10" height="10" fill="#5caaf2"/><rect x="12.5" y="2.5" width="5" height="5" fill="#cfe6fb" stroke="#2f86d8"/>
<rect x="0" y="10" width="10" height="10" fill="#5caaf2"/><rect x="2.5" y="12.5" width="5" height="5" fill="#cfe6fb" stroke="#2f86d8"/></svg>
<svg class="r" style="left:268px;top:142px" width="5" height="3" viewBox="0 0 5 3"><path d="M0,0 H5 L2.5,3 Z" fill="#a5a5a5"/></svg>
<svg class="r" style="left:318px;top:142px" width="5" height="3" viewBox="0 0 5 3"><path d="M0,0 H5 L2.5,3 Z" fill="#a5a5a5"/></svg>
<svg class="r" style="left:368px;top:141px" width="5" height="3" viewBox="0 0 5 3"><path d="M0,0 H5 L2.5,3 Z" fill="#222"/></svg>
<svg class="r" style="left:597px;top:83px" width="5" height="3" viewBox="0 0 5 3"><path d="M0,0 H5 L2.5,3 Z" fill="#222"/></svg>
<svg class="r" style="left:610px;top:109px" width="5" height="3" viewBox="0 0 5 3"><path d="M0,0 H5 L2.5,3 Z" fill="#222"/></svg>
<svg class="r" style="left:659px;top:141px" width="5" height="3" viewBox="0 0 5 3"><path d="M0,0 H5 L2.5,3 Z" fill="#222"/></svg>
<svg class="r" style="left:757px;top:85px" width="5" height="3" viewBox="0 0 5 3"><path d="M0,0 H5 L2.5,3 Z" fill="#a5a5a5"/></svg>
<svg class="r" style="left:18px;top:188px" width="28" height="27" viewBox="0 0 28 27"><circle cx="13.6" cy="12.7" r="11.6" fill="none" stroke="#7c7c7c" stroke-width="1.5"/><path d="M8,12.7 H20 M13,7.5 L8,12.7 L13,17.9" fill="none" stroke="#7a7a7a" stroke-width="2.6"/></svg>
<svg class="r" style="left:57px;top:188px" width="28" height="27" viewBox="0 0 28 27"><circle cx="13.6" cy="12.7" r="11.6" fill="none" stroke="#7c7c7c" stroke-width="1.5"/><path d="M7,12.7 H19 M14,7.5 L19,12.7 L14,17.9" fill="none" stroke="#7a7a7a" stroke-width="2.6"/></svg>
<svg class="r" style="left:96px;top:199px" width="7" height="4" viewBox="0 0 7 4"><path d="M0,0 H7 L3.5,4 Z" fill="#7a7a7a"/></svg>
<svg class="r" style="left:119px;top:193px" width="14" height="16" viewBox="0 0 14 16"><path d="M7,2 V15.5 M1.5,7.5 L7,2 L12.5,7.5" fill="none" stroke="#7a7a7a" stroke-width="1.9"/></svg>
<svg class="r" style="left:144px;top:189px;" width="21" height="21" viewBox="0 0 20 20"><use href="#lib"/></svg>
<svg class="r" style="left:173px;top:196px" width="6" height="10" viewBox="0 0 6 10"><path d="M0.5,0.5 L5.5,5 L0.5,9.5 Z" fill="#6d6d6d"/></svg>
<svg class="r" style="left:256px;top:196px" width="6" height="10" viewBox="0 0 6 10"><path d="M0.5,0.5 L5.5,5 L0.5,9.5 Z" fill="#6d6d6d"/></svg>
<svg class="r" style="left:357px;top:196px" width="6" height="10" viewBox="0 0 6 10"><path d="M0.5,0.5 L5.5,5 L0.5,9.5 Z" fill="#6d6d6d"/></svg>
<svg class="r" style="left:829px;top:197px" width="11" height="8" viewBox="0 0 11 8"><path d="M1,1 L5.5,6 L10,1" fill="none" stroke="#777" stroke-width="2"/></svg>
<svg class="r" style="left:852px;top:192px" width="18" height="18" viewBox="0 0 18 18"><path d="M14.8,10.5 A5.8,5.8 0 1 1 9,4.2" fill="none" stroke="#777" stroke-width="2.1"/><path d="M8.5,0.5 L13.5,4.3 L8.5,8 Z" fill="#777"/></svg>
<svg class="r" style="left:1063px;top:193px" width="15" height="15" viewBox="0 0 15 15"><circle cx="9.5" cy="5.5" r="3.8" fill="none" stroke="#777" stroke-width="1.6"/><path d="M6.8,8.3 L2,13" stroke="#777" stroke-width="2.2" stroke-linecap="round"/></svg>
<div class="r" style="left:0px;top:0px;width:243px;height:806px;overflow:hidden">
<svg class="r" style="left:32px;top:236px" width="8" height="11" viewBox="0 0 8 11"><path d="M0.5,0.5 L6,5 L0.5,9.5 Z" fill="none" stroke="#8a8a8a" stroke-width="1"/></svg>
<svg class="r" style="left:42px;top:230px;" width="21" height="21" viewBox="0 0 20 20"><use href="#lib"/></svg>
<svg class="r" style="left:32px;top:263px" width="8" height="11" viewBox="0 0 8 11"><path d="M0.5,0.5 L6,5 L0.5,9.5 Z" fill="none" stroke="#8a8a8a" stroke-width="1"/></svg>
<svg class="r" style="left:42px;top:256px" width="22" height="22" viewBox="0 0 22 22"><path d="M0.8,16.5 L11,12 L21,15.5 L10.5,20.5 Z" fill="url(#gTray)" stroke="#3b9ade" stroke-width="0.9"/>
<ellipse cx="10" cy="14" rx="3.6" ry="2.6" fill="#2a7fd4"/><path d="M13,14 V2 Q16,3 17.5,7 Q17,9 15,6.5 L14.5,6 V14" fill="#2a7fd4"/></svg>
<svg class="r" style="left:32px;top:290px" width="8" height="11" viewBox="0 0 8 11"><path d="M0.5,0.5 L6,5 L0.5,9.5 Z" fill="none" stroke="#8a8a8a" stroke-width="1"/></svg>
<svg class="r" style="left:42px;top:283px" width="22" height="22" viewBox="0 0 22 22"><path d="M0.8,16.5 L11,12 L21,15.5 L10.5,20.5 Z" fill="url(#gTray)" stroke="#3b9ade" stroke-width="0.9"/>
<path d="M5,4 L16,5 L16.5,15.5 L5.5,17 Z" fill="#eee" stroke="#aaa" stroke-width="0.8"/><path d="M6.5,6 L15,6.8 L15.2,14 L7,15 Z" fill="#4aa0d6"/><path d="M7,12 Q10,9.5 15,12 L15.2,14 L7,15 Z" fill="#3d7a3a"/></svg>
<svg class="r" style="left:32px;top:317px" width="8" height="11" viewBox="0 0 8 11"><path d="M0.5,0.5 L6,5 L0.5,9.5 Z" fill="none" stroke="#8a8a8a" stroke-width="1"/></svg>
<svg class="r" style="left:42px;top:310px" width="22" height="22" viewBox="0 0 22 22"><path d="M0.8,16.5 L11,12 L21,15.5 L10.5,20.5 Z" fill="url(#gTray)" stroke="#3b9ade" stroke-width="0.9"/>
<path d="M5,1 L16,2 L16.5,16 L5.5,17 Z" fill="#333"/><path d="M6.2,2.5 V15.5" stroke="#ddd" stroke-width="1" stroke-dasharray="1,1"/><rect x="7.5" y="3" width="7" height="5.5" fill="#3a77c8"/><rect x="7.5" y="9.5" width="7" height="5.5" fill="#3a77c8"/>
<path d="M9,7 L12,4.5 L14,6 M9,14 L12,11.5 L14,13" stroke="#c8402a" stroke-width="1.4" fill="none"/></svg>
<svg class="r" style="left:22px;top:371px" width="8" height="11" viewBox="0 0 8 11"><path d="M0.5,0.5 L6,5 L0.5,9.5 Z" fill="none" stroke="#8a8a8a" stroke-width="1"/></svg>
<svg class="r" style="left:32px;top:364px" width="22" height="22" viewBox="0 0 22 22"><circle cx="5.5" cy="10" r="4.6" fill="#3766cc"/><circle cx="14.5" cy="5" r="4.3" fill="#4a7fdc"/><circle cx="15" cy="15.5" r="4.8" fill="#3a63c8"/><circle cx="10.5" cy="10.5" r="4.6" fill="#3fa447"/>
<circle cx="4.2" cy="8.6" r="1.4" fill="#c7dafa"/><circle cx="13.5" cy="3.8" r="1.3" fill="#c7dafa"/><circle cx="14" cy="14" r="1.5" fill="#c7dafa"/><circle cx="9.3" cy="9" r="1.4" fill="#c9ecc4"/></svg>
<svg class="r" style="left:20px;top:426px" width="8" height="8" viewBox="0 0 8 8"><path d="M6.5,0.5 V6.5 H0.5 Z" fill="#404040"/></svg>
<svg class="r" style="left:32px;top:419px" width="22" height="20" viewBox="0 0 22 20"><path d="M1.5,6 L4,4 L6,4.5 L6,16 L2,15 Z" fill="#d8d8d8" stroke="#a0a0a0" stroke-width="0.7"/>
<path d="M6,2 L19.5,3 L19,13.5 L6.5,13 Z" fill="#fff" stroke="#9c9c9c" stroke-width="0.8"/><path d="M7.5,3.5 L18,4.3 L17.6,12 L8,11.5 Z" fill="#1b3fd6"/><path d="M12,4 L18,4.3 L17.6,12 L14,11.8 Z" fill="#6d8ff0"/>
<path d="M10,14 L15,14 L17,17 L8,17 Z" fill="#e0e0e0" stroke="#aaa" stroke-width="0.6"/></svg>
<svg class="r" style="left:30px;top:453px" width="8" height="8" viewBox="0 0 8 8"><path d="M6.5,0.5 V6.5 H0.5 Z" fill="#404040"/></svg>
<svg class="r" style="left:42px;top:448px" width="22" height="18" viewBox="0 0 22 18"><path d="M1,10 L11,7.5 L20,10 L20,13.5 L10,16.5 L1,13.5 Z" fill="#9aa3a8" stroke="#6c757a" stroke-width="0.7"/><path d="M1,10 L11,7.5 L20,10 L10,12.5 Z" fill="#d4dadd"/>
<rect x="1" y="1.5" width="4" height="4" fill="#19b4ef"/><rect x="5.7" y="1.5" width="4" height="4" fill="#19b4ef"/><rect x="1" y="6.2" width="4" height="3.5" fill="#19b4ef"/><rect x="5.7" y="6.2" width="4" height="3.5" fill="#19b4ef"/>
<circle cx="15" cy="13" r="0.9" fill="#4c4"/></svg>
<svg class="r" style="left:41px;top:479px" width="8" height="11" viewBox="0 0 8 11"><path d="M0.5,0.5 L6,5 L0.5,9.5 Z" fill="none" stroke="#8a8a8a" stroke-width="1"/></svg>
<svg class="r" style="left:53px;top:473px;" width="20" height="20" viewBox="0 0 20 20"><use href="#folderp"/></svg>
<svg class="r" style="left:53px;top:500px;" width="20" height="20" viewBox="0 0 20 20"><use href="#folderp"/></svg>
<svg class="r" style="left:53px;top:527px;" width="20" height="20" viewBox="0 0 20 20"><use href="#folderp"/></svg>
<svg class="r" style="left:41px;top:560px" width="8" height="11" viewBox="0 0 8 11"><path d="M0.5,0.5 L6,5 L0.5,9.5 Z" fill="none" stroke="#8a8a8a" stroke-width="1"/></svg>
<svg class="r" style="left:53px;top:554px;" width="20" height="20" viewBox="0 0 20 20"><use href="#folder"/></svg>
<svg class="r" style="left:41px;top:587px" width="8" height="11" viewBox="0 0 8 11"><path d="M0.5,0.5 L6,5 L0.5,9.5 Z" fill="none" stroke="#8a8a8a" stroke-width="1"/></svg>
<svg class="r" style="left:53px;top:581px;" width="20" height="20" viewBox="0 0 20 20"><use href="#folder"/></svg>
<svg class="r" style="left:41px;top:614px" width="8" height="11" viewBox="0 0 8 11"><path d="M0.5,0.5 L6,5 L0.5,9.5 Z" fill="none" stroke="#8a8a8a" stroke-width="1"/></svg>
<svg class="r" style="left:53px;top:608px;" width="20" height="20" viewBox="0 0 20 20"><use href="#folderp"/></svg>
<svg class="r" style="left:40px;top:642px" width="8" height="8" viewBox="0 0 8 8"><path d="M6.5,0.5 V6.5 H0.5 Z" fill="#404040"/></svg>
<svg class="r" style="left:53px;top:635px;" width="20" height="20" viewBox="0 0 20 20"><use href="#folder"/></svg>
<svg class="r" style="left:51px;top:668px" width="8" height="11" viewBox="0 0 8 11"><path d="M0.5,0.5 L6,5 L0.5,9.5 Z" fill="none" stroke="#8a8a8a" stroke-width="1"/></svg>
<svg class="r" style="left:63px;top:662px;" width="20" height="20" viewBox="0 0 20 20"><use href="#folderp"/></svg>
<svg class="r" style="left:51px;top:695px" width="8" height="11" viewBox="0 0 8 11"><path d="M0.5,0.5 L6,5 L0.5,9.5 Z" fill="none" stroke="#8a8a8a" stroke-width="1"/></svg>
<svg class="r" style="left:63px;top:689px;" width="20" height="20" viewBox="0 0 20 20"><use href="#folder"/></svg>
<svg class="r" style="left:51px;top:722px" width="8" height="11" viewBox="0 0 8 11"><path d="M0.5,0.5 L6,5 L0.5,9.5 Z" fill="none" stroke="#8a8a8a" stroke-width="1"/></svg>
<svg class="r" style="left:63px;top:716px;" width="20" height="20" viewBox="0 0 20 20"><use href="#folder"/></svg>
<svg class="r" style="left:63px;top:743px;" width="20" height="20" viewBox="0 0 20 20"><use href="#folder"/></svg>
<svg class="r" style="left:41px;top:776px" width="8" height="11" viewBox="0 0 8 11"><path d="M0.5,0.5 L6,5 L0.5,9.5 Z" fill="none" stroke="#8a8a8a" stroke-width="1"/></svg>
<svg class="r" style="left:53px;top:770px;" width="20" height="20" viewBox="0 0 20 20"><use href="#folder"/></svg>
<svg class="r" style="left:41px;top:803px" width="8" height="11" viewBox="0 0 8 11"><path d="M0.5,0.5 L6,5 L0.5,9.5 Z" fill="none" stroke="#8a8a8a" stroke-width="1"/></svg>
<svg class="r" style="left:53px;top:797px;" width="20" height="20" viewBox="0 0 20 20"><use href="#folder"/></svg>
</div>
<svg class="r" style="left:247px;top:233px" width="11" height="7" viewBox="0 0 11 7"><path d="M1,6 L5.5,1.5 L10,6" fill="none" stroke="#606060" stroke-width="1.6"/></svg>
<svg class="r" style="left:247px;top:791px" width="11" height="7" viewBox="0 0 11 7"><path d="M1,1 L5.5,5.5 L10,1" fill="none" stroke="#606060" stroke-width="1.6"/></svg>
<svg class="r" style="left:1085px;top:233px" width="11" height="7" viewBox="0 0 11 7"><path d="M1,6 L5.5,1.5 L10,6" fill="none" stroke="#606060" stroke-width="1.6"/></svg>
<svg class="r" style="left:1085px;top:792px" width="11" height="7" viewBox="0 0 11 7"><path d="M1,1 L5.5,5.5 L10,1" fill="none" stroke="#606060" stroke-width="1.6"/></svg>
<svg class="r" style="left:475px;top:228px" width="11" height="6" viewBox="0 0 11 6"><path d="M0.5,5.5 L5.5,0.8 L10.5,5.5 Z" fill="#bcd6f0" stroke="#86acd6" stroke-width="0.8"/></svg>
<div class="r" style="left:264px;top:258px;width:817px;height:548px;overflow:hidden">
<svg class="r" style="left:26px;top:-10px" width="20" height="20" viewBox="0 0 20 20"><use href="#folder"/></svg>
<svg class="r" style="left:26px;top:17px" width="20" height="20" viewBox="0 0 20 20"><path d="M4.5,1.5 H14 L18,5.5 V19.5 H4.5 Z" fill="#f2f2f2" stroke="#b0b0b0"/><rect x="6" y="6" width="10" height="12" fill="#f08a2c"/><rect x="6" y="10" width="10" height="1.5" fill="#fbe0c0"/><rect x="6" y="15" width="10" height="1.2" fill="#fbe0c0"/>
<rect x="0.5" y="2" width="11" height="5" fill="#e3661d"/><text x="2" y="6.3" font-size="4.5" font-weight="bold" fill="#fff" font-family="Liberation Sans">FLV</text></svg>
<svg class="r" style="left:26px;top:44px" width="20" height="20" viewBox="0 0 20 20"><rect x="0" y="0" width="20" height="20" fill="#d9522c"/><path d="M4.5,13 V9.5 A5.5,5.5 0 0 1 15.5,9.5 V13" fill="none" stroke="#fff" stroke-width="1"/><rect x="4.3" y="11" width="2" height="5" rx="1" fill="#fff"/><rect x="13.7" y="11" width="2" height="5" rx="1" fill="#fff"/></svg>
<svg class="r" style="left:26px;top:71px" width="20" height="20" viewBox="0 0 20 20"><rect x="0" y="0" width="20" height="20" fill="#ac193d"/><rect x="3.5" y="5.5" width="13" height="9" fill="none" stroke="#fff" stroke-width="1"/><circle cx="10" cy="10" r="1.8" fill="none" stroke="#fff" stroke-width="1.2"/></svg>
<svg class="r" style="left:26px;top:98px" width="20" height="20" viewBox="0 0 20 20"><rect x="0.5" y="2.5" width="18.5" height="15" fill="#f7f7f7" stroke="#e0e0e0"/><rect x="0.5" y="16.3" width="18.8" height="2" fill="#b3b3b3"/>
<rect x="14.5" y="2.5" width="3.2" height="14" fill="#9aa9bf"/><rect x="15.3" y="4" width="1.3" height="6" fill="#dfe6f0"/>
<rect x="6" y="4" width="8.5" height="9" fill="#b4dcf5"/><rect x="6" y="10" width="8.5" height="2" fill="#4f9a7a"/>
<rect x="3.5" y="8.5" width="7.5" height="7.5" fill="#fff" fill-opacity="0.6" stroke="#9d9d9d"/></svg>
<svg class="r" style="left:26px;top:125px" width="20" height="20" viewBox="0 0 20 20"><use href="#worda"/></svg>
<svg class="r" style="left:26px;top:152px" width="20" height="20" viewBox="0 0 20 20"><use href="#pdf"/></svg>
<svg class="r" style="left:26px;top:179px" width="20" height="20" viewBox="0 0 20 20"><use href="#pdf"/></svg>
<svg class="r" style="left:26px;top:206px" width="20" height="20" viewBox="0 0 20 20"><use href="#word"/></svg>
<svg class="r" style="left:26px;top:233px" width="20" height="20" viewBox="0 0 20 20"><use href="#worda"/></svg>
<svg class="r" style="left:26px;top:260px" width="20" height="20" viewBox="0 0 20 20"><use href="#excel"/></svg>
<svg class="r" style="left:26px;top:287px" width="20" height="20" viewBox="0 0 20 20"><use href="#pdf"/></svg>
<svg class="r" style="left:26px;top:314px" width="20" height="20" viewBox="0 0 20 20"><use href="#pdf"/></svg>
<svg class="r" style="left:26px;top:341px" width="20" height="20" viewBox="0 0 20 20"><defs><linearGradient id="gRdp" x1="0" y1="0" x2="1" y2="0"><stop offset="0" stop-color="#6a78dc"/><stop offset="0.45" stop-color="#7f8ee6"/><stop offset="0.5" stop-color="#dfe5fb"/><stop offset="1" stop-color="#c9d2f6"/></linearGradient></defs>
<path d="M2,0.5 L17,1.5 L16.5,12.5 L1.5,13 Z" fill="#eee" stroke="#dcdcdc"/><path d="M3,1.8 L16,2.7 L15.5,11.5 L2.5,12 Z" fill="url(#gRdp)"/>
<ellipse cx="9.5" cy="16.5" rx="5" ry="2" fill="#e8e8e8"/>
<circle cx="14.8" cy="15" r="4.6" fill="#f6f6f6" stroke="#c9c9c9" stroke-width="0.8"/><path d="M12.3,17.5 L14,13.5 M15.2,16.5 L17,12.5" stroke="#79c079" stroke-width="1.3"/></svg>
<svg class="r" style="left:26px;top:368px" width="20" height="20" viewBox="0 0 20 20"><use href="#pdf"/></svg>
<svg class="r" style="left:26px;top:395px" width="20" height="20" viewBox="0 0 20 20"><use href="#excel"/></svg>
<svg class="r" style="left:26px;top:422px" width="20" height="20" viewBox="0 0 20 20"><use href="#worda"/></svg>
<svg class="r" style="left:26px;top:449px" width="20" height="20" viewBox="0 0 20 20"><use href="#worda"/></svg>
<svg class="r" style="left:26px;top:476px" width="20" height="20" viewBox="0 0 20 20"><path d="M6,1.5 H14 L18,5.5 V19 H6 Z" fill="#0d4a9c" stroke="#0a3a7c"/><rect x="0.5" y="0.5" width="12" height="5.5" fill="#1a5bb8"/><text x="2" y="5" font-size="4.5" font-weight="bold" fill="#fff" font-family="Liberation Sans">PSD</text><text x="7.5" y="15.5" font-size="8" font-weight="bold" fill="#5cc8f5" font-family="Liberation Sans">Ps</text></svg>
<svg class="r" style="left:26px;top:503px" width="20" height="20" viewBox="0 0 20 20"><use href="#pdf"/></svg>
<svg class="r" style="left:26px;top:530px" width="20" height="20" viewBox="0 0 20 20"><use href="#txt"/></svg>
</div>
<svg class="r" style="left:1044px;top:812px" width="21" height="20" viewBox="0 0 21 20"><rect x="1.5" y="1.5" width="6" height="3.5" rx="0.8" fill="#fff" stroke="#888" stroke-width="0.8"/><rect x="1.5" y="5.5" width="6" height="3.5" rx="0.8" fill="#fff" stroke="#888" stroke-width="0.8"/><rect x="1.5" y="9.5" width="6" height="3.5" rx="0.8" fill="#fff" stroke="#888" stroke-width="0.8"/><rect x="1.5" y="13.5" width="6" height="3.5" rx="0.8" fill="#fff" stroke="#888" stroke-width="0.8"/>
<path d="M3.5,3.2 h2" stroke="#5a5" stroke-width="1"/><path d="M3.5,7.2 h2" stroke="#e33" stroke-width="1"/><path d="M3.5,11.2 h2" stroke="#38e" stroke-width="1"/><path d="M3.5,15.2 h2" stroke="#9c3" stroke-width="1"/>
<path d="M9,3.2 h4 M14,3.2 h4 M9,7.2 h4 M14,7.2 h4 M9,11.2 h4 M14,11.2 h4 M9,15.2 h4 M14,15.2 h4" stroke="#555" stroke-width="1"/></svg>
<svg class="r" style="left:1072px;top:811px" width="18" height="16" viewBox="0 0 18 16"><rect x="1" y="1" width="15" height="13" rx="1" fill="#fff" stroke="#8a96a8" stroke-width="0.9"/><rect x="2.5" y="2.5" width="12" height="10" fill="#4aa3ea"/><path d="M2.5,8 Q7,7 14.5,11 V12.5 H2.5Z" fill="#1f6a3a"/><rect x="8" y="3" width="5" height="3" fill="#cfe9fb"/></svg>
</body></html>
